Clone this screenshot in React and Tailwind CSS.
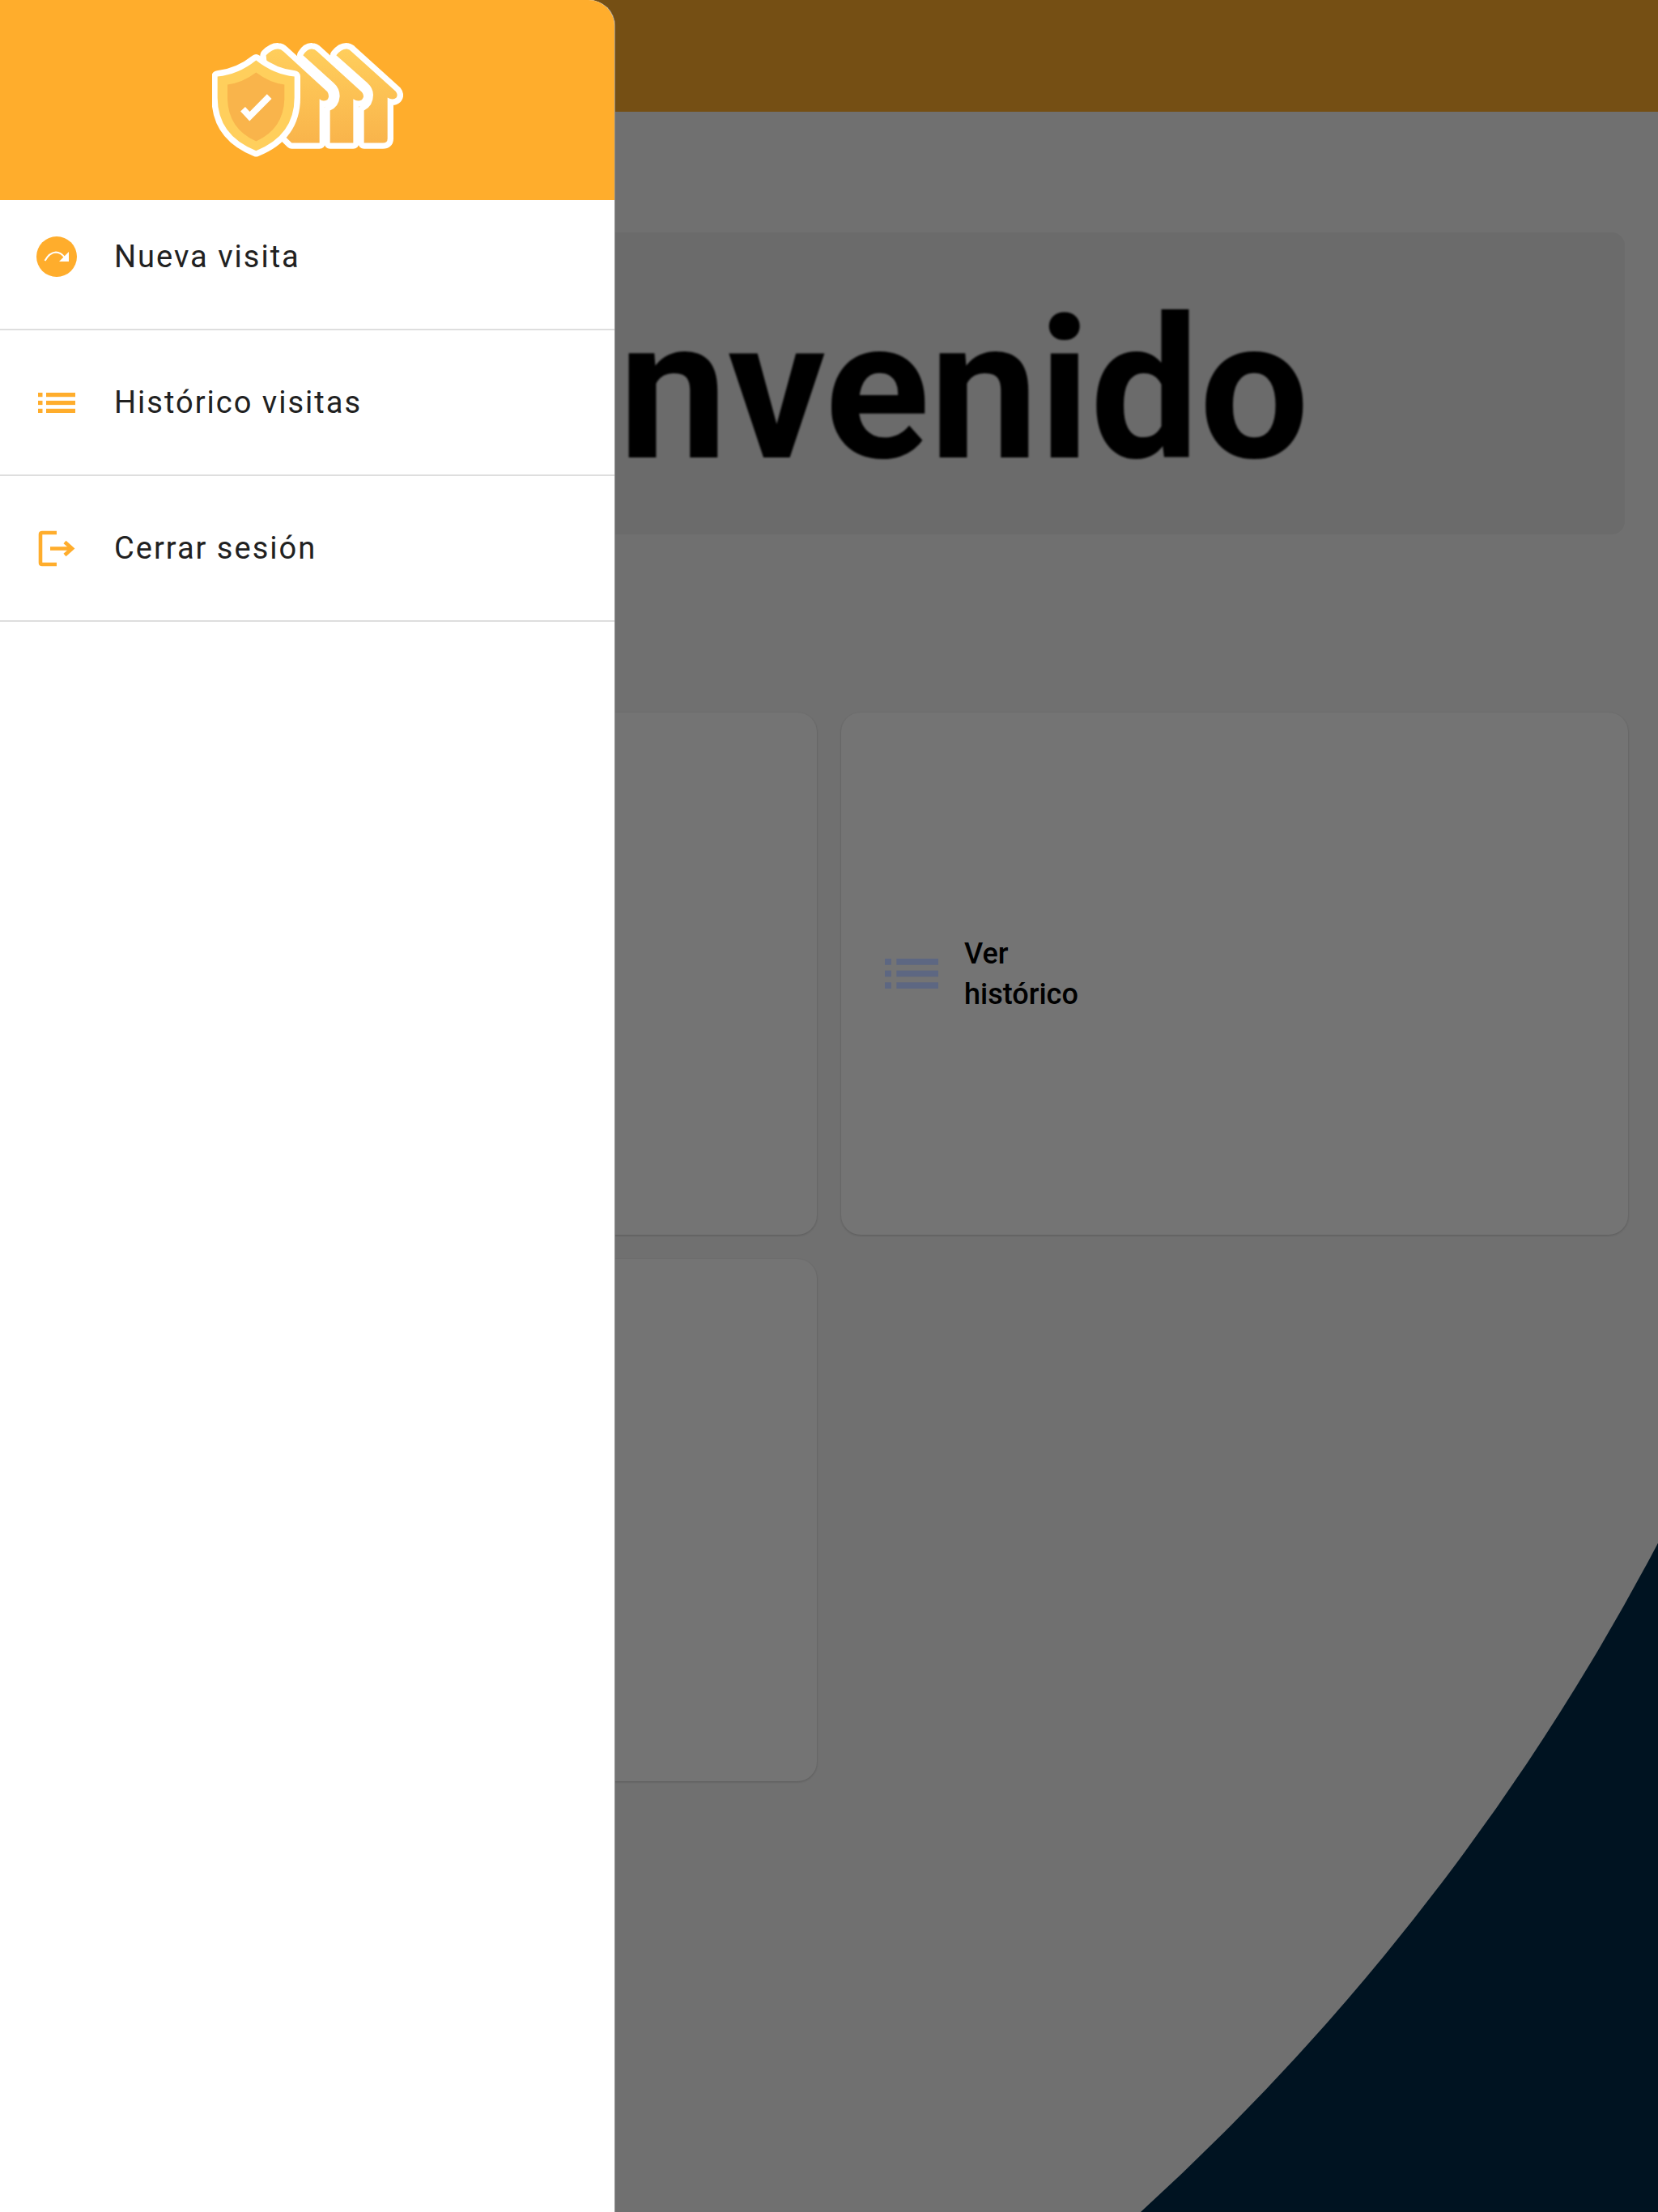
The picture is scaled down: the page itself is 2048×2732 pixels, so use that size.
function Logo() {
  const houses = [
    "M585 143Q605 118 625 120Q635 122 640 128L805 277Q815 290 808 300Q795 312 775 300L775 452Q775 468 758 468L688 468L688 348Q722 330 722 290Q722 265 700 245Z",
    "M462 143Q478 118 495 120Q505 120 515 130L680 280Q692 295 680 308Q665 318 648 305L648 468L562 468L562 348Q595 335 598 295Q598 265 575 245Z",
    "M325 143Q350 118 370 120Q380 120 390 130L552 278Q562 295 552 308Q535 318 523 305L523 468L420 468L350 400Z",
  ];
  const shield = "M288 162Q222 215 145 222L145 300Q145 440 288 497Q430 440 430 300L430 222Q355 215 288 162Z";

  return (
    <svg viewBox="125 98 708 422" className="h-[141px] w-[236px]">
      <defs>
        <linearGradient id="houseFill" gradientUnits="userSpaceOnUse" x1="0" y1="120" x2="0" y2="468">
          <stop offset="0" stopColor="#ffce5c" />
          <stop offset="1" stopColor="#f9b44b" />
        </linearGradient>
      </defs>
      {houses.map((d) => (
        <path key={d} d={d} fill="#fff" stroke="#fff" strokeWidth="44" strokeLinejoin="round" />
      ))}
      {houses.map((d) => (
        <path key={d} d={d} fill="url(#houseFill)" />
      ))}
      <path d={shield} fill="#ffcf5c" stroke="#fff" strokeWidth="44" strokeLinejoin="round" paintOrder="stroke" />
      <path d="M288 207Q238 245 182 252L182 305Q185 415 288 462Q390 415 393 305L393 252Q338 245 288 207Z" fill="#f9b44b" />
      <path d="M239 343L264 370L337 296" fill="none" stroke="#fff" strokeWidth="24" />
    </svg>
  );
}

function RedoIcon() {
  return (
    <svg viewBox="0 0 50 50" className="h-[50px] w-[50px]">
      <circle cx="25" cy="25" r="25" fill="#ffad2c" />
      <path d="M10.5 30Q16 20 24 19.5Q30 19.5 35 26" fill="none" stroke="#fff" strokeWidth="2" />
      <path d="M28 31H40V19Z" fill="#fff" />
    </svg>
  );
}

function ListIcon({ className, color }) {
  return (
    <svg viewBox="0 0 46 24" preserveAspectRatio="none" className={className} fill={color}>
      <rect x="0" y="0" width="5.5" height="5" />
      <rect x="0" y="9.5" width="5.5" height="5" />
      <rect x="0" y="19" width="5.5" height="5" />
      <rect x="10" y="0" width="36" height="5" />
      <rect x="10" y="9.5" width="36" height="5" />
      <rect x="10" y="19" width="36" height="5" />
    </svg>
  );
}

function LogoutIcon() {
  return (
    <svg viewBox="0 0 46 45" className="h-[45px] w-[46px]" fill="none" stroke="#ffad2c" strokeWidth="4.6">
      <path d="M23 3H5Q3 3 3 5V40Q3 42 5 42H23" />
      <path d="M15 22.5H42" />
      <path d="M33 14.5L42 22.5L33 30.5" />
    </svg>
  );
}

const menu = [
  { label: "Nueva visita", icon: <RedoIcon />, row: "h-[161px] pb-5" },
  { label: "Histórico visitas", icon: <ListIcon className="h-[25px] w-[46px]" color="#ffad2c" />, row: "h-[180px]" },
  { label: "Cerrar sesión", icon: <LogoutIcon />, row: "h-[180px]" },
];

export default function App() {
  return (
    <div className="relative h-[2732px] w-[2048px] overflow-hidden bg-[#022b48] font-['Roboto',sans-serif]">
      {/* the big curved page background */}
      <div className="absolute left-[-3639px] top-[-2516px] h-[6034px] w-[6034px] rounded-full bg-[#f4f4f4]" />

      <div className="relative">
        <header className="h-[138px] bg-[#ffad2c]" />

        <main className="pl-[37px] pr-[37px] pt-[149px]">
          <div className="mr-[4px] flex h-[373px] items-center justify-end rounded-2xl bg-[#e9e9e9] pr-[390px] pt-[18px]">
            <h1 className="origin-bottom scale-y-[1.01] text-[240px] font-bold leading-none text-black blur-[1px]">Bienvenido</h1>
          </div>

          <div className="mt-[220px] grid grid-cols-2 gap-[30px]">
            <div className="h-[645px] rounded-3xl bg-[#fcfcfc] shadow-[0_1px_3px_rgba(0,0,0,0.2)]" />
            <div className="flex h-[645px] items-center rounded-3xl bg-[#fcfcfc] pl-[54px] shadow-[0_1px_3px_rgba(0,0,0,0.2)]">
              {/* sits above the scrim, the reference colour is brighter than the scrim allows */}
              <div className="relative z-10">
                <ListIcon className="h-[37px] w-[66px]" color="#5d6782" />
              </div>
              <span className="ml-[32px] text-[36px] font-medium leading-[50px] text-black">
                Ver
                <br />
                histórico
              </span>
            </div>
            <div className="h-[645px] rounded-3xl bg-[#fcfcfc] shadow-[0_1px_3px_rgba(0,0,0,0.2)]" />
          </div>
        </main>
      </div>

      {/* scrim behind the open drawer */}
      <div className="absolute inset-0 bg-black/54" />

      <aside className="absolute inset-y-0 left-0 z-20 w-[759px] overflow-hidden rounded-tr-[32px] bg-white shadow-[1px_0_0_#8f8f8f]">
        <div className="flex h-[247px] items-center justify-center bg-[#ffad2c]">
          <Logo />
        </div>
        {menu.map((item) => (
          <div key={item.label} className={`flex items-center border-b-2 border-[#dedede] pl-[45px] ${item.row}`}>
            <div className="flex w-[50px] justify-center">{item.icon}</div>
            <span className="ml-[46px] text-[38px] leading-none tracking-[2px] text-[#212121]">{item.label}</span>
          </div>
        ))}
      </aside>
    </div>
  );
}
